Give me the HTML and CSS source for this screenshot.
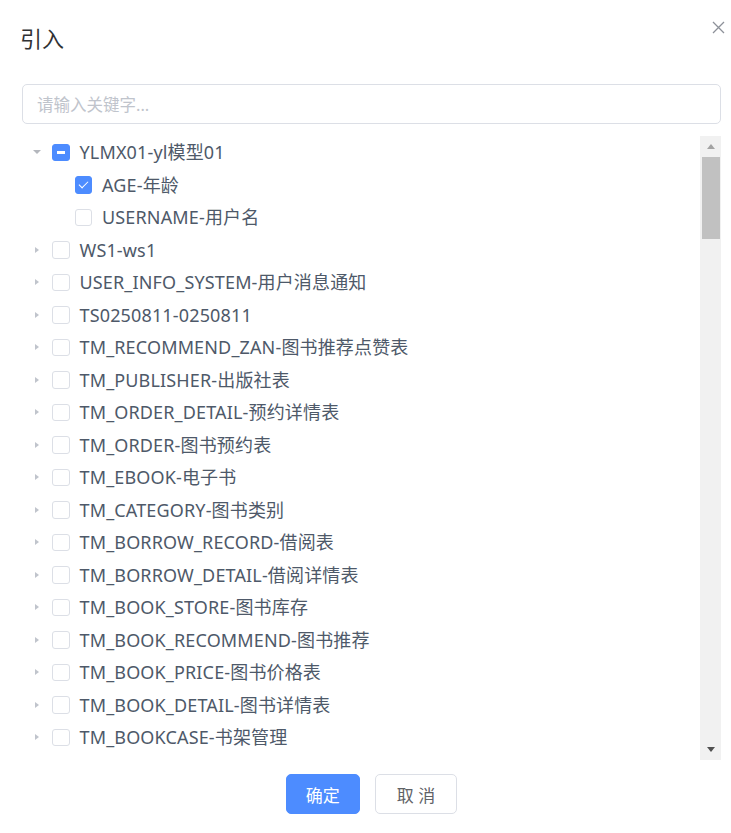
FILE: index.html
```html
<!DOCTYPE html>
<html lang="zh-CN">
<head>
    <meta charset="UTF-8">
    <meta name="viewport" content="width=device-width, initial-scale=1.0">
    <title>引入</title>
    <link rel="stylesheet" href="styles.css">
</head>
<body>
    <div class="dialog">
        <div class="dialog-header">
            <span class="dialog-title">引入</span>
            <button class="dialog-close" aria-label="关闭">
                <svg width="13" height="13" viewBox="0 0 13 13">
                    <path d="M1 1 L12 12 M12 1 L1 12" stroke="#8d9199" stroke-width="1.3" fill="none"/>
                </svg>
            </button>
        </div>

        <div class="dialog-body">
            <input class="search" type="text" placeholder="请输入关键字...">

            <div class="tree-box">
                <div class="tree">
                    <!-- 模型节点：展开，部分选中 -->
                    <div class="node">
                        <span class="caret open"></span>
                        <span class="check half"></span>
                        <span class="label">YLMX01-yl模型01</span>
                    </div>
                    <div class="node child">
                        <span class="caret leaf"></span>
                        <span class="check on"></span>
                        <span class="label">AGE-年龄</span>
                    </div>
                    <div class="node child">
                        <span class="caret leaf"></span>
                        <span class="check"></span>
                        <span class="label">USERNAME-用户名</span>
                    </div>

                    <div class="node"><span class="caret"></span><span class="check"></span><span class="label">WS1-ws1</span></div>
                    <div class="node"><span class="caret"></span><span class="check"></span><span class="label">USER_INFO_SYSTEM-用户消息通知</span></div>
                    <div class="node"><span class="caret"></span><span class="check"></span><span class="label">TS0250811-0250811</span></div>
                    <div class="node"><span class="caret"></span><span class="check"></span><span class="label">TM_RECOMMEND_ZAN-图书推荐点赞表</span></div>
                    <div class="node"><span class="caret"></span><span class="check"></span><span class="label">TM_PUBLISHER-出版社表</span></div>
                    <div class="node"><span class="caret"></span><span class="check"></span><span class="label">TM_ORDER_DETAIL-预约详情表</span></div>
                    <div class="node"><span class="caret"></span><span class="check"></span><span class="label">TM_ORDER-图书预约表</span></div>
                    <div class="node"><span class="caret"></span><span class="check"></span><span class="label">TM_EBOOK-电子书</span></div>
                    <div class="node"><span class="caret"></span><span class="check"></span><span class="label">TM_CATEGORY-图书类别</span></div>
                    <div class="node"><span class="caret"></span><span class="check"></span><span class="label">TM_BORROW_RECORD-借阅表</span></div>
                    <div class="node"><span class="caret"></span><span class="check"></span><span class="label">TM_BORROW_DETAIL-借阅详情表</span></div>
                    <div class="node"><span class="caret"></span><span class="check"></span><span class="label">TM_BOOK_STORE-图书库存</span></div>
                    <div class="node"><span class="caret"></span><span class="check"></span><span class="label">TM_BOOK_RECOMMEND-图书推荐</span></div>
                    <div class="node"><span class="caret"></span><span class="check"></span><span class="label">TM_BOOK_PRICE-图书价格表</span></div>
                    <div class="node"><span class="caret"></span><span class="check"></span><span class="label">TM_BOOK_DETAIL-图书详情表</span></div>
                    <div class="node"><span class="caret"></span><span class="check"></span><span class="label">TM_BOOKCASE-书架管理</span></div>
                </div>

                <!-- 滚动条 -->
                <div class="scrollbar">
                    <span class="scroll-btn"><span class="arrow-up"></span></span>
                    <span class="scroll-thumb"></span>
                    <span class="scroll-track"></span>
                    <span class="scroll-btn"><span class="arrow-down"></span></span>
                </div>
            </div>
        </div>

        <div class="dialog-footer">
            <button class="btn btn-primary">确定</button>
            <button class="btn btn-cancel">取 消</button>
        </div>
    </div>
</body>
</html>
```

FILE: styles.css
```css
body {
    margin: 0;
    background-color: #ffffff;
    font-family: "Noto Sans", "Noto Sans CJK SC", sans-serif;
    color: #4e5969;
}
.dialog {
    width: 731px;
    height: 833px;
    background-color: #ffffff;
}
.dialog-header {
    display: flex;
    justify-content: space-between;
    align-items: flex-start;
    padding: 23px 6px 0 20px;
    height: 32px;
}
.dialog-title {
    font-size: 22px;
    line-height: 30px;
    color: #303133;
}
.dialog-close {
    border: none;
    background: none;
    padding: 0;
    margin-top: -2px;
    width: 13px;
    height: 13px;
    cursor: pointer;
    display: flex;
}
.dialog-body {
    padding: 29px 10px 0 22px;
}
.search {
    display: block;
    box-sizing: border-box;
    width: 100%;
    height: 40px;
    padding: 0 14px;
    border: 1px solid #dcdfe6;
    border-radius: 5px;
    font-family: inherit;
    font-size: 16.5px;
    color: #4e5969;
    outline: none;
}
.search::placeholder {
    color: #c0c4cc;
}
.tree-box {
    display: flex;
    margin-top: 12px;
    height: 624px;
}
.tree {
    flex: 1;
    overflow: hidden;
}
.node {
    display: flex;
    align-items: center;
    height: 32.5px;
    font-size: 18px;
    letter-spacing: 0.15px;
    white-space: nowrap;
}
.node.child {
    padding-left: 22.5px;
}
.caret {
    width: 30px;
    height: 32.5px;
    display: flex;
    align-items: center;
    justify-content: center;
}
.caret::before {
    content: "";
    width: 0;
    height: 0;
    border-left: 4.5px solid #c0c4cc;
    border-top: 3.5px solid transparent;
    border-bottom: 3.5px solid transparent;
}
.caret.open::before {
    border-left: 4px solid transparent;
    border-right: 4px solid transparent;
    border-top: 4.5px solid #b4b7bd;
    border-bottom: none;
}
.caret.leaf::before {
    display: none;
}
.check {
    box-sizing: border-box;
    width: 17.5px;
    height: 17.5px;
    border: 1px solid #dcdfe6;
    border-radius: 3px;
    background-color: #ffffff;
    margin-right: 10px;
    flex-shrink: 0;
    display: flex;
    align-items: center;
    justify-content: center;
}
.check.on,
.check.half {
    background-color: #4d8cff;
    border-color: #4d8cff;
}
.check.half::before {
    content: "";
    width: 8px;
    height: 2.5px;
    background-color: #ffffff;
}
.check.on::before {
    content: "";
    width: 4px;
    height: 8px;
    border: 1.5px solid #ffffff;
    border-top: none;
    border-left: none;
    transform: translateY(-1px) rotate(45deg);
}
.label {
    line-height: 1;
}
.scrollbar {
    width: 21px;
    display: flex;
    flex-direction: column;
    background-color: #f1f1f1;
}
.scroll-btn {
    height: 21px;
    display: flex;
    align-items: center;
    justify-content: center;
    flex-shrink: 0;
}
.arrow-up {
    width: 0;
    height: 0;
    border-left: 4.5px solid transparent;
    border-right: 4.5px solid transparent;
    border-bottom: 5px solid #a3a3a3;
}
.arrow-down {
    width: 0;
    height: 0;
    border-left: 4.5px solid transparent;
    border-right: 4.5px solid transparent;
    border-top: 5px solid #505050;
}
.scroll-thumb {
    height: 82px;
    margin: 0 1px 0 2px;
    background-color: #c1c1c1;
    flex-shrink: 0;
}
.scroll-track {
    flex: 1;
}
.dialog-footer {
    display: flex;
    justify-content: center;
    gap: 15px;
    padding: 14px 0 0 12px;
}
.btn {
    box-sizing: border-box;
    height: 40px;
    padding: 0 19px;
    border: 1px solid #dcdfe6;
    border-radius: 5px;
    background-color: #ffffff;
    color: #606266;
    font-family: inherit;
    font-size: 17px;
    cursor: pointer;
}
.btn-cancel {
    padding: 0 21px;
}
.btn-primary {
    background-color: #4d8cff;
    border-color: #4d8cff;
    color: #ffffff;
}
```
